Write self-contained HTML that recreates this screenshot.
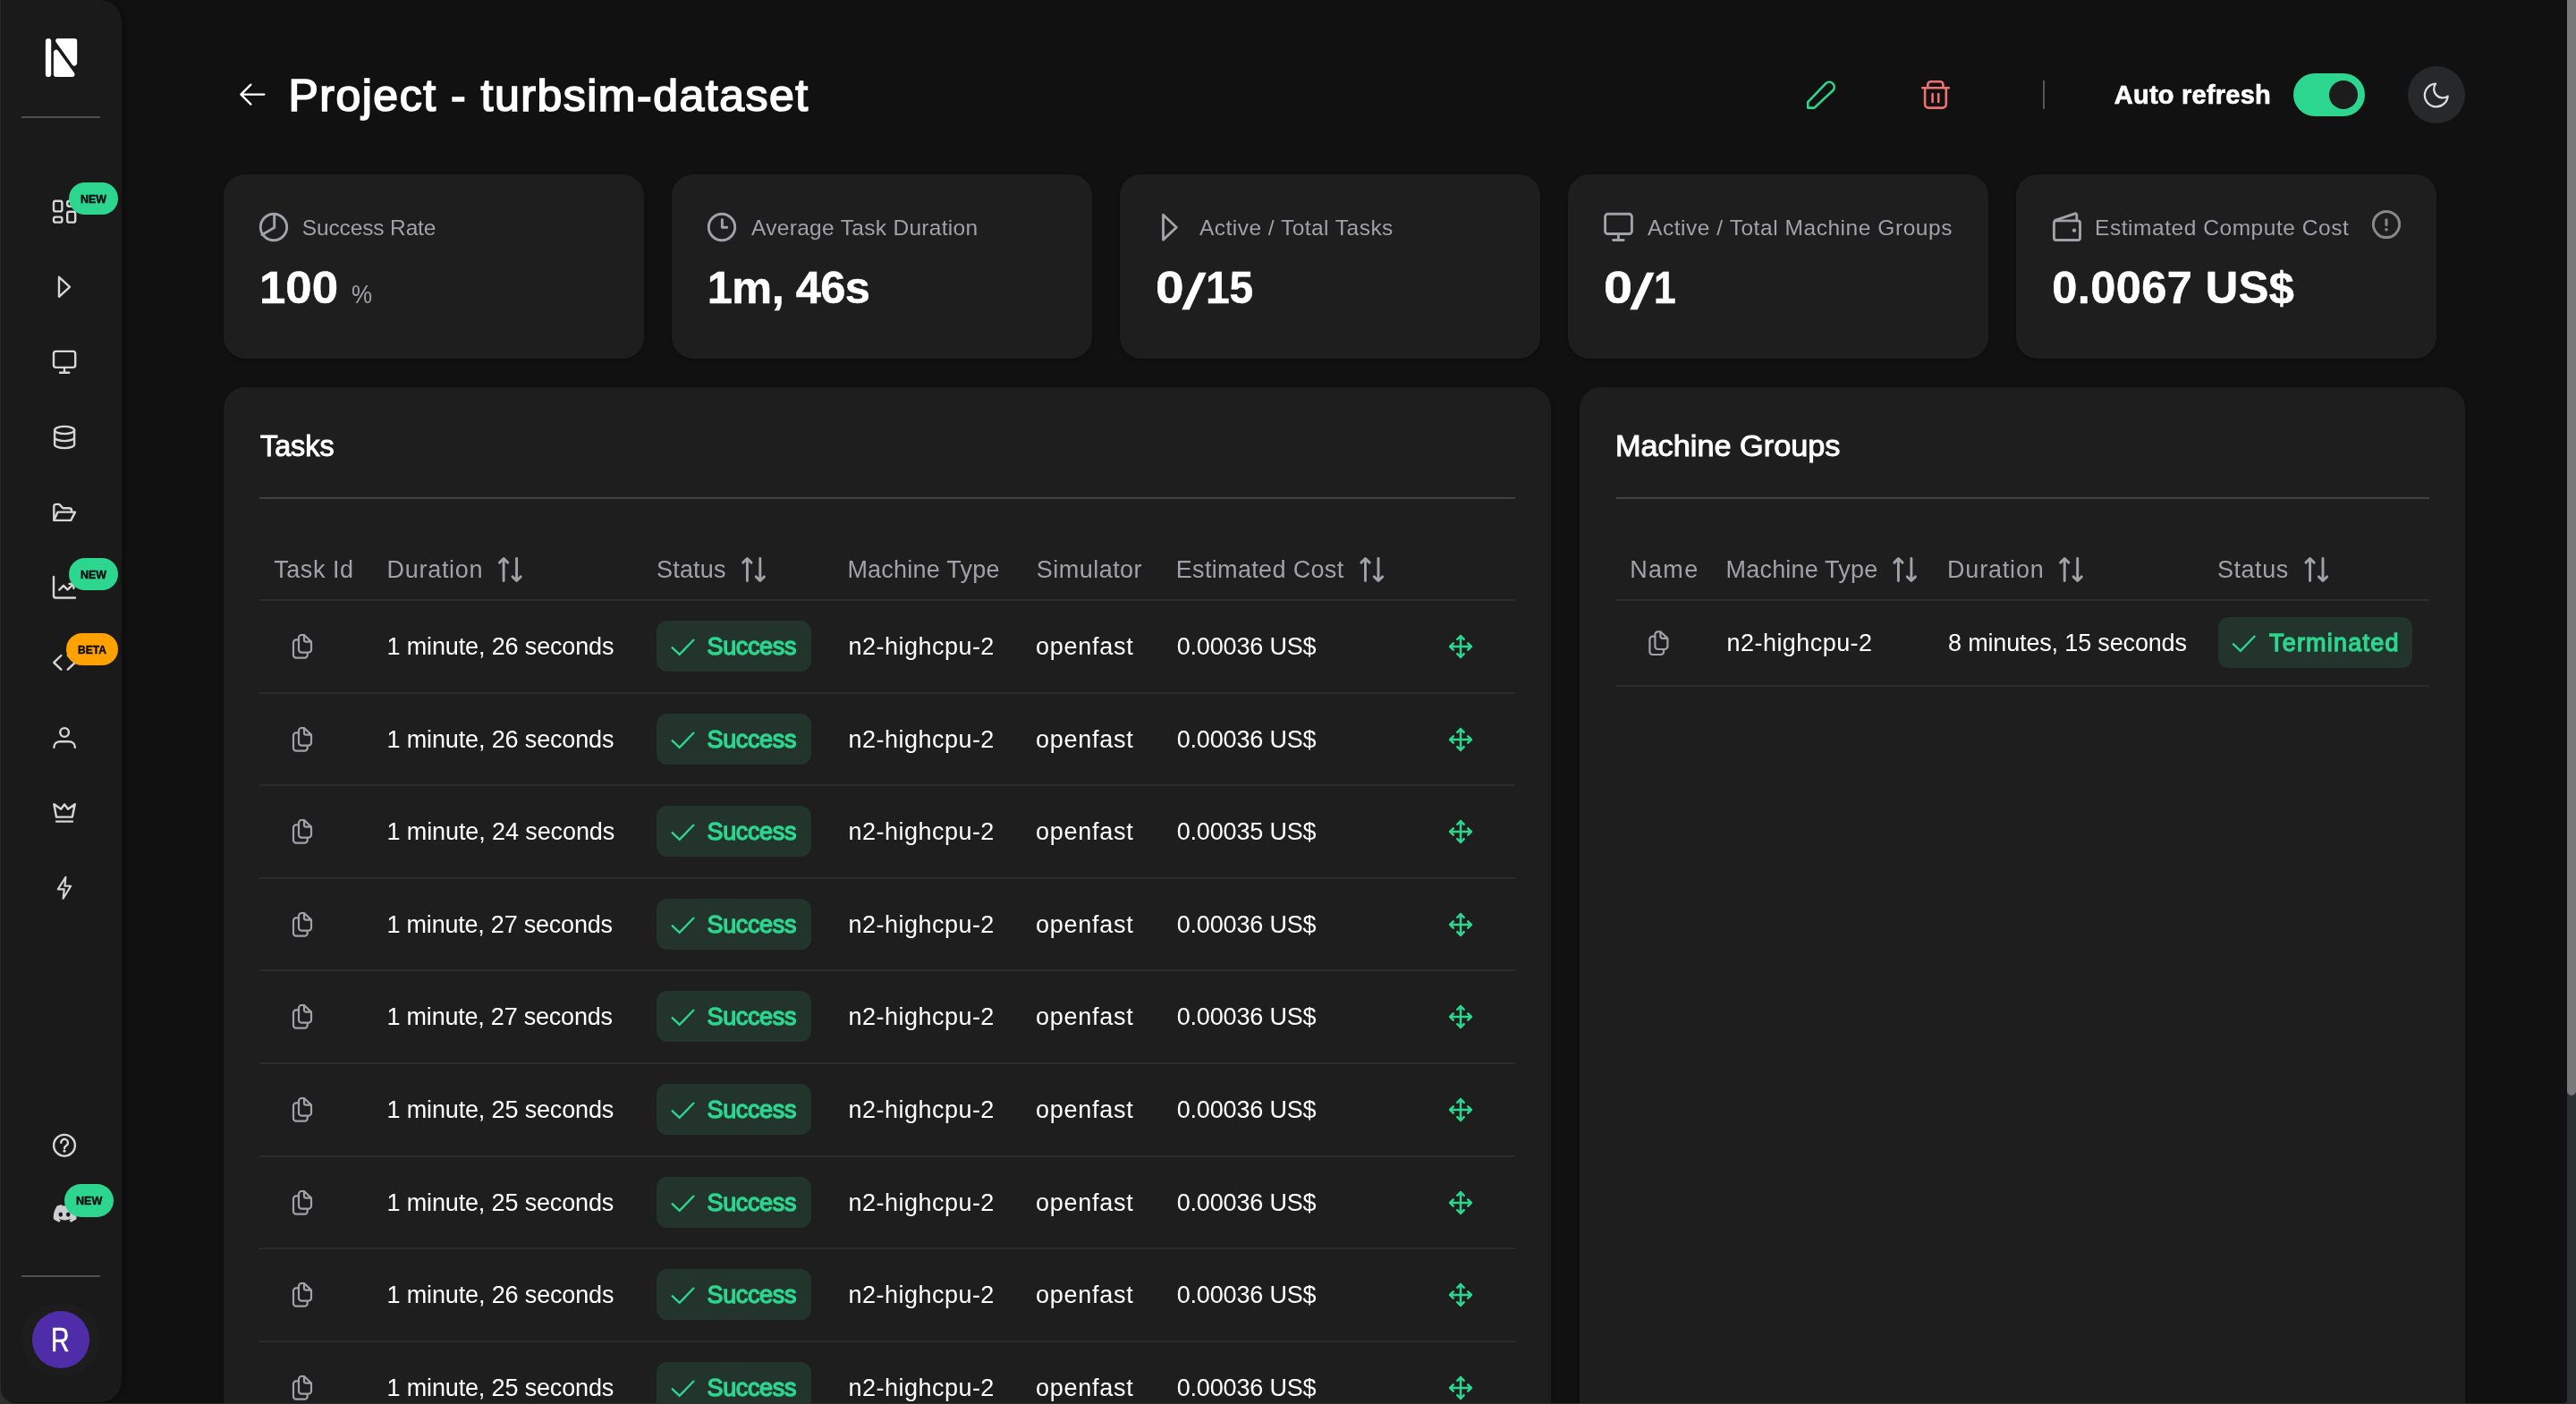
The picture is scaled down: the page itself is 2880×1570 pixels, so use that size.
<!DOCTYPE html>
<html lang="en"><head><meta charset="utf-8"><title>Project - turbsim-dataset</title>
<style>
html,body{margin:0;padding:0;background:#111111;}
body{width:2880px;height:1570px;overflow:hidden;position:relative;font-family:"Liberation Sans",sans-serif;color:#fff;}
#app{position:absolute;left:0;top:0;width:2880px;height:1570px;overflow:hidden;}
.b,.i,.t{position:absolute;display:block;}
.t{white-space:nowrap;}
.i{overflow:visible;}
#txt{position:absolute;left:0;top:0;width:2880px;height:1570px;will-change:transform;}
</style></head>
<body><div id="app">
<main>
<div class="b card" style="left:250.0px;top:195px;width:469.6px;height:206px;background:#1e1e1e;border-radius:24px;box-shadow:0 2px 4px rgba(0,0,0,.28);"></div><div class="b card" style="left:751.1px;top:195px;width:469.6px;height:206px;background:#1e1e1e;border-radius:24px;box-shadow:0 2px 4px rgba(0,0,0,.28);"></div><div class="b card" style="left:1252.2px;top:195px;width:469.6px;height:206px;background:#1e1e1e;border-radius:24px;box-shadow:0 2px 4px rgba(0,0,0,.28);"></div><div class="b card" style="left:1753.3px;top:195px;width:469.6px;height:206px;background:#1e1e1e;border-radius:24px;box-shadow:0 2px 4px rgba(0,0,0,.28);"></div><div class="b card" style="left:2254.4px;top:195px;width:469.6px;height:206px;background:#1e1e1e;border-radius:24px;box-shadow:0 2px 4px rgba(0,0,0,.28);"></div>
<div class="b panel" style="left:250px;top:433px;width:1484px;height:1200px;background:#1e1e1e;border-radius:24px;box-shadow:0 2px 4px rgba(0,0,0,.28);"></div><div class="b panel" style="left:1766px;top:433px;width:990px;height:1200px;background:#1e1e1e;border-radius:24px;box-shadow:0 2px 4px rgba(0,0,0,.28);"></div>
<div class="b" style="left:290px;top:556px;width:1404px;height:2px;background:#404042"></div><div class="b" style="left:1806px;top:556px;width:910px;height:2px;background:#404042"></div><div class="b" style="left:290px;top:670px;width:1404px;height:2px;background:#2b2c2e"></div><div class="b" style="left:290px;top:774px;width:1404px;height:2px;background:#2b2c2e"></div><div class="b" style="left:290px;top:877px;width:1404px;height:2px;background:#2b2c2e"></div><div class="b" style="left:290px;top:981px;width:1404px;height:2px;background:#2b2c2e"></div><div class="b" style="left:290px;top:1084px;width:1404px;height:2px;background:#2b2c2e"></div><div class="b" style="left:290px;top:1188px;width:1404px;height:2px;background:#2b2c2e"></div><div class="b" style="left:290px;top:1292px;width:1404px;height:2px;background:#2b2c2e"></div><div class="b" style="left:290px;top:1395px;width:1404px;height:2px;background:#2b2c2e"></div><div class="b" style="left:290px;top:1499px;width:1404px;height:2px;background:#2b2c2e"></div><div class="b" style="left:290px;top:1602px;width:1404px;height:2px;background:#2b2c2e"></div><div class="b" style="left:1806px;top:670px;width:910px;height:2px;background:#2b2c2e"></div><div class="b" style="left:1806px;top:766px;width:910px;height:2px;background:#2b2c2e"></div><div class="b" style="left:2284px;top:90px;width:2px;height:32px;background:#555"></div>
<div class="b tag" style="left:734px;top:694px;width:173px;height:57px;background:#22342c;border-radius:12px;"></div><div class="b tag" style="left:734px;top:798px;width:173px;height:57px;background:#22342c;border-radius:12px;"></div><div class="b tag" style="left:734px;top:901px;width:173px;height:57px;background:#22342c;border-radius:12px;"></div><div class="b tag" style="left:734px;top:1005px;width:173px;height:57px;background:#22342c;border-radius:12px;"></div><div class="b tag" style="left:734px;top:1108px;width:173px;height:57px;background:#22342c;border-radius:12px;"></div><div class="b tag" style="left:734px;top:1212px;width:173px;height:57px;background:#22342c;border-radius:12px;"></div><div class="b tag" style="left:734px;top:1316px;width:173px;height:57px;background:#22342c;border-radius:12px;"></div><div class="b tag" style="left:734px;top:1419px;width:173px;height:57px;background:#22342c;border-radius:12px;"></div><div class="b tag" style="left:734px;top:1523px;width:173px;height:57px;background:#22342c;border-radius:12px;"></div><div class="b tag" style="left:2480px;top:690px;width:217px;height:57px;background:#22342c;border-radius:12px;"></div>
</main>
<aside>
<div class="b sidebar" style="left:0px;top:0px;width:136px;height:1568px;background:#1a1a1a;border-radius:0 24px 24px 0;box-shadow:2px 0 8px rgba(0,0,0,.3);"></div>
<div class="b" style="left:24px;top:130px;width:88px;height:2px;background:#505050"></div><div class="b" style="left:24px;top:1425.7px;width:88px;height:2px;background:#505050"></div>
<svg class="i" style="left:48px;top:40px" width="42" height="50" viewBox="48 40 42 50" fill="#fff"><rect x="50.9" y="42.9" width="6.3" height="43.2" rx="3.1"/><path d="M64.8,42.9 H83.2 a3,3 0 0 1 3,3 V70.6 a3,3 0 0 1 -5.4,1.8 L62.6,47 a2.6,2.6 0 0 1 2.2,-4.1 Z"/><path d="M59.9,58.3 a2.8,2.8 0 0 1 5.1,-1.6 L83,81.6 a2.8,2.8 0 0 1 -2.3,4.5 H62.9 a3,3 0 0 1 -3,-3 Z"/></svg>
<svg class="i" style="left:56px;top:221px" width="32" height="32" viewBox="56 221 32 32" fill="none" stroke="#d6d6d9" stroke-width="2.4" stroke-linecap="round" stroke-linejoin="round" ><rect x="60" y="224.8" width="9.4" height="11.6" rx="2.2"/><rect x="60" y="242.6" width="9.4" height="6" rx="2.2"/><rect x="75.2" y="224.8" width="9" height="6" rx="2.2"/><rect x="75.2" y="236.8" width="9" height="11.8" rx="2.2"/></svg>
<svg class="i" style="left:56px;top:305px" width="32" height="32" viewBox="56 305 32 32" fill="none" stroke="#d6d6d9" stroke-width="2.4" stroke-linecap="round" stroke-linejoin="round" ><path d="M66,309.8 L78,320.8 L66,331.8 Z"/></svg>
<svg class="i" style="left:56px;top:388px" width="32" height="32" viewBox="56 388 32 32" fill="none" stroke="#d6d6d9" stroke-width="2.4" stroke-linecap="round" stroke-linejoin="round" ><rect x="60" y="392.9" width="24.2" height="18" rx="2.6"/><path d="M72,411 V416.6 M67,416.8 H77.2"/></svg>
<svg class="i" style="left:56px;top:472px" width="32" height="32" viewBox="56 472 32 32" fill="none" stroke="#d6d6d9" stroke-width="2.4" stroke-linecap="round" stroke-linejoin="round" ><ellipse cx="72.1" cy="481" rx="11" ry="4.1"/><path d="M61.1,481 V497 c0,2.300 4.900,4.100 11,4.100 s11,-1.800 11,-4.100 V481 M61.1,489 c0,2.300 4.900,4.100 11,4.100 s11,-1.800 11,-4.100"/></svg>
<svg class="i" style="left:56px;top:556px" width="32" height="32" viewBox="56 556 32 32" fill="none" stroke="#d6d6d9" stroke-width="2.4" stroke-linecap="round" stroke-linejoin="round" ><path d="M60.300,581.900 V566.400 a2.500,2.500 0 0 1 2.500,-2.500 H66.200 L70.300,568.200 H77.300 a2.800,2.800 0 0 1 2.800,2.800 V572.400 M60.300,581.900 L64.600,572.600 H84 L79.200,581.900 Z"/></svg>
<svg class="i" style="left:56px;top:641px" width="32" height="32" viewBox="56 641 32 32" fill="none" stroke="#d6d6d9" stroke-width="2.4" stroke-linecap="round" stroke-linejoin="round" ><path d="M60,645 V666.3 a2.2,2.2 0 0 0 2.2,2.2 H84 M66.2,659.6 L71,654.8 L75.6,659.4 L82,653.2 M77.6,652.9 H82.4 V657.8"/></svg>
<svg class="i" style="left:56px;top:725px" width="32" height="32" viewBox="56 725 32 32" fill="none" stroke="#d6d6d9" stroke-width="2.4" stroke-linecap="round" stroke-linejoin="round" ><path d="M68.4,733 L60.2,740.8 L68.4,748.6 M75.8,748.6 L84,740.8 L75.8,733"/></svg>
<svg class="i" style="left:56px;top:808px" width="32" height="32" viewBox="56 808 32 32" fill="none" stroke="#d6d6d9" stroke-width="2.4" stroke-linecap="round" stroke-linejoin="round" ><circle cx="72.1" cy="819" r="4.850"/><path d="M60.400,835.800 V835.600 C60.400,831.800 63.400,829.300 67.400,829.300 H76.800 C80.800,829.300 83.800,831.800 83.800,835.600 V835.800"/></svg>
<svg class="i" style="left:56px;top:893px" width="32" height="32" viewBox="56 893 32 32" fill="none" stroke="#d6d6d9" stroke-width="2.4" stroke-linecap="round" stroke-linejoin="round" ><path d="M60.400,899.200 L63,913.600 H80.800 L83.800,899.200 L76,904.800 L72.100,899.400 L68.200,904.800 Z M63,918.600 H81"/></svg>
<svg class="i" style="left:56px;top:976px" width="32" height="32" viewBox="56 976 32 32" fill="none" stroke="#d6d6d9" stroke-width="2.1" stroke-linecap="round" stroke-linejoin="round" ><path d="M73.400,980.800 L64.800,994.400 H71.800 L70.600,1004.800 L79.200,990.800 H72.400 Z"/></svg>
<svg class="i" style="left:56px;top:1265px" width="32" height="32" viewBox="56 1265 32 32" fill="none" stroke="#d6d6d9" stroke-width="2.4" stroke-linecap="round" stroke-linejoin="round" ><circle cx="72" cy="1280.800" r="11.9"/><path d="M68.200,1277.700 a3.900,3.900 0 1 1 6.300,3.100 c-1.600,1.100 -2.500,1.700 -2.500,3.200"/><circle cx="72" cy="1287.100" r="1.700" fill="#d6d6d9" stroke="none"/></svg>
<svg class="i" style="left:56px;top:1343px" width="32" height="28" viewBox="56 1343 32 28" fill="#cfcfd2"><g transform="translate(72 1347) scale(0.955) translate(-72 -1347)"><path d="M80.6,1348.6 c-1.8,-0.8 -3.6,-1.4 -5.6,-1.7 l-0.8,1.6 c-1.5,-0.2 -3,-0.2 -4.500,0 l-0.8,-1.6 c-2,0.3 -3.800,0.900 -5.600,1.700 c-3.500,5.300 -4.500,10.400 -4,15.500 c2.300,1.700 4.600,2.800 6.800,3.500 l1.500,-2.400 c-0.800,-0.300 -1.600,-0.700 -2.300,-1.100 l0.600,-0.400 c4.400,2 9.200,2 13.600,0 l0.600,0.400 c-0.700,0.400 -1.500,0.800 -2.300,1.100 l1.500,2.400 c2.200,-0.700 4.500,-1.800 6.800,-3.500 c0.600,-5.900 -1,-11 -4,-15.500 Z"/><ellipse cx="67.6" cy="1358.600" rx="2.4" ry="2.700" fill="#1a1a1a"/><ellipse cx="76.400" cy="1358.600" rx="2.4" ry="2.700" fill="#1a1a1a"/></g></svg>
<div class="b" style="left:77px;top:204px;width:55px;height:36px;background:#2dd68e;border-radius:18px;"></div><div class="b" style="left:77px;top:624px;width:55px;height:36px;background:#2dd68e;border-radius:18px;"></div><div class="b" style="left:74px;top:708px;width:58px;height:36px;background:#ffa200;border-radius:18px;"></div><div class="b" style="left:72px;top:1324px;width:55px;height:37px;background:#2dd68e;border-radius:18.5px;"></div>
</aside>
<div class="b" style="left:2564px;top:82px;width:80px;height:48px;background:#2dd68e;border-radius:24px;"></div><div class="b" style="left:2604px;top:90px;width:32px;height:32px;background:#1c1c1c;border-radius:16px;"></div><div class="b" style="left:2692px;top:74px;width:64px;height:64px;background:#27282a;border-radius:32px;"></div><div class="b" style="left:24px;top:1458px;width:88px;height:80px;background:#1d1d1d;border-radius:40px;"></div><div class="b" style="left:36px;top:1466px;width:64px;height:64px;background:#502da8;border-radius:32px;"></div><div class="b" style="left:0px;top:0px;width:1px;height:1570px;background:#262728;"></div><div class="b" style="left:0px;top:1569px;width:2880px;height:1px;background:#26302c;"></div><div class="b" style="left:0;top:1552px;width:18px;height:18px;background:radial-gradient(circle at 100% 0,transparent 17px,#2e3130 18px)"></div><div class="b" style="left:2862px;top:1552px;width:18px;height:18px;background:radial-gradient(circle at 0 0,transparent 17px,#2e3130 18px)"></div><div class="b" style="left:2870px;top:0px;width:10px;height:1570px;background:#2c3030;"></div><div class="b" style="left:2870px;top:0px;width:10px;height:1224.5px;background:#797979;border-radius:0 0 5px 5px;"></div>
<svg class="i" style="left:554px;top:620px" width="34" height="34" viewBox="554 620 34 34" fill="none" stroke="#a1a1aa" stroke-width="2.9" stroke-linecap="round" stroke-linejoin="round" ><path d="M563.1,649.6 V624.8 M558.5,629.1 L563.1,624.5 L567.8,629.1 M577.6,624.4 V649.4 M573.0,644.9 L577.6,649.5 L582.2,644.9"/></svg>
<svg class="i" style="left:826px;top:620px" width="34" height="34" viewBox="826 620 34 34" fill="none" stroke="#a1a1aa" stroke-width="2.9" stroke-linecap="round" stroke-linejoin="round" ><path d="M835.4,649.6 V624.8 M830.7,629.1 L835.4,624.5 L840.0,629.1 M849.8,624.4 V649.4 M845.2,644.9 L849.8,649.5 L854.5,644.9"/></svg>
<svg class="i" style="left:1517px;top:620px" width="34" height="34" viewBox="1517 620 34 34" fill="none" stroke="#a1a1aa" stroke-width="2.9" stroke-linecap="round" stroke-linejoin="round" ><path d="M1526.5,649.6 V624.8 M1521.9,629.1 L1526.5,624.5 L1531.2,629.1 M1541.0,624.4 V649.4 M1536.3,644.9 L1541.0,649.5 L1545.7,644.9"/></svg>
<svg class="i" style="left:2113px;top:620px" width="34" height="34" viewBox="2113 620 34 34" fill="none" stroke="#a1a1aa" stroke-width="2.9" stroke-linecap="round" stroke-linejoin="round" ><path d="M2122.4,649.6 V624.8 M2117.8,629.1 L2122.4,624.5 L2127.1,629.1 M2136.9,624.4 V649.4 M2132.2,644.9 L2136.9,649.5 L2141.5,644.9"/></svg>
<svg class="i" style="left:2299px;top:620px" width="34" height="34" viewBox="2299 620 34 34" fill="none" stroke="#a1a1aa" stroke-width="2.9" stroke-linecap="round" stroke-linejoin="round" ><path d="M2308.2,649.6 V624.8 M2303.6,629.1 L2308.2,624.5 L2312.9,629.1 M2322.7,624.4 V649.4 M2318.1,644.9 L2322.7,649.5 L2327.3,644.9"/></svg>
<svg class="i" style="left:2573px;top:620px" width="34" height="34" viewBox="2573 620 34 34" fill="none" stroke="#a1a1aa" stroke-width="2.9" stroke-linecap="round" stroke-linejoin="round" ><path d="M2582.6,649.6 V624.8 M2577.9,629.1 L2582.6,624.5 L2587.2,629.1 M2597.0,624.4 V649.4 M2592.4,644.9 L2597.0,649.5 L2601.7,644.9"/></svg>
<svg class="i" style="left:324px;top:706px" width="30" height="36" viewBox="324 706 30 36" fill="none" stroke="#a1a1aa" stroke-width="2.2" stroke-linecap="round" stroke-linejoin="round" ><path d="M340.0,710.0 H337.2 a3.2,3.2 0 0 0 -3.2,3.2 V726.5 a3.2,3.2 0 0 0 3.2,3.2 H344.8 a3.2,3.2 0 0 0 3.2,-3.2 V717.6 L340.0,710.0 V715.4 a2.2,2.2 0 0 0 2.2,2.2 H348.0 M333.0,715.4 H331.2 a3.2,3.2 0 0 0 -3.2,3.2 V732.5 a3.2,3.2 0 0 0 3.2,3.2 H340.5 a3.2,3.2 0 0 0 3.2,-3.2 V731.0"/></svg>
<svg class="i" style="left:748px;top:712px" width="32" height="24" viewBox="748 712 32 24" fill="none" stroke="#2dd68e" stroke-width="2.3" stroke-linecap="butt" stroke-linejoin="miter" ><path d="M751.0,723.7 L759.7,731.9 L776.0,715.0"/></svg>
<svg class="i" style="left:1617px;top:706.5px" width="32" height="32" viewBox="1617 706.5 32 32" fill="none" stroke="#2dd68e" stroke-width="2.5" stroke-linecap="round" stroke-linejoin="round" ><path d="M1633,710.6 V734.4 M1621.1,722.5 H1644.9 M1629.3,714.3000000000001 L1633,710.6 L1636.7,714.3000000000001 M1629.3,730.6999999999999 L1633,734.4 L1636.7,730.6999999999999 M1624.8,718.8 L1621.1,722.5 L1624.8,726.2 M1641.2,718.8 L1644.9,722.5 L1641.2,726.2"/></svg>
<svg class="i" style="left:324px;top:810px" width="30" height="36" viewBox="324 810 30 36" fill="none" stroke="#a1a1aa" stroke-width="2.2" stroke-linecap="round" stroke-linejoin="round" ><path d="M340.0,814.0 H337.2 a3.2,3.2 0 0 0 -3.2,3.2 V830.5 a3.2,3.2 0 0 0 3.2,3.2 H344.8 a3.2,3.2 0 0 0 3.2,-3.2 V821.6 L340.0,814.0 V819.4 a2.2,2.2 0 0 0 2.2,2.2 H348.0 M333.0,819.4 H331.2 a3.2,3.2 0 0 0 -3.2,3.2 V836.5 a3.2,3.2 0 0 0 3.2,3.2 H340.5 a3.2,3.2 0 0 0 3.2,-3.2 V835.0"/></svg>
<svg class="i" style="left:748px;top:816px" width="32" height="24" viewBox="748 816 32 24" fill="none" stroke="#2dd68e" stroke-width="2.3" stroke-linecap="butt" stroke-linejoin="miter" ><path d="M751.0,827.7 L759.7,835.9 L776.0,819.0"/></svg>
<svg class="i" style="left:1617px;top:810.5px" width="32" height="32" viewBox="1617 810.5 32 32" fill="none" stroke="#2dd68e" stroke-width="2.5" stroke-linecap="round" stroke-linejoin="round" ><path d="M1633,814.6 V838.4 M1621.1,826.5 H1644.9 M1629.3,818.3000000000001 L1633,814.6 L1636.7,818.3000000000001 M1629.3,834.6999999999999 L1633,838.4 L1636.7,834.6999999999999 M1624.8,822.8 L1621.1,826.5 L1624.8,830.2 M1641.2,822.8 L1644.9,826.5 L1641.2,830.2"/></svg>
<svg class="i" style="left:324px;top:912px" width="30" height="36" viewBox="324 912 30 36" fill="none" stroke="#a1a1aa" stroke-width="2.2" stroke-linecap="round" stroke-linejoin="round" ><path d="M340.0,917.0 H337.2 a3.2,3.2 0 0 0 -3.2,3.2 V933.5 a3.2,3.2 0 0 0 3.2,3.2 H344.8 a3.2,3.2 0 0 0 3.2,-3.2 V924.6 L340.0,917.0 V922.4 a2.2,2.2 0 0 0 2.2,2.2 H348.0 M333.0,922.4 H331.2 a3.2,3.2 0 0 0 -3.2,3.2 V939.5 a3.2,3.2 0 0 0 3.2,3.2 H340.5 a3.2,3.2 0 0 0 3.2,-3.2 V938.0"/></svg>
<svg class="i" style="left:748px;top:918px" width="32" height="24" viewBox="748 918 32 24" fill="none" stroke="#2dd68e" stroke-width="2.3" stroke-linecap="butt" stroke-linejoin="miter" ><path d="M751.0,930.7 L759.7,938.9 L776.0,922.0"/></svg>
<svg class="i" style="left:1617px;top:913.5px" width="32" height="32" viewBox="1617 913.5 32 32" fill="none" stroke="#2dd68e" stroke-width="2.5" stroke-linecap="round" stroke-linejoin="round" ><path d="M1633,917.6 V941.4 M1621.1,929.5 H1644.9 M1629.3,921.3000000000001 L1633,917.6 L1636.7,921.3000000000001 M1629.3,937.6999999999999 L1633,941.4 L1636.7,937.6999999999999 M1624.8,925.8 L1621.1,929.5 L1624.8,933.2 M1641.2,925.8 L1644.9,929.5 L1641.2,933.2"/></svg>
<svg class="i" style="left:324px;top:1016px" width="30" height="36" viewBox="324 1016 30 36" fill="none" stroke="#a1a1aa" stroke-width="2.2" stroke-linecap="round" stroke-linejoin="round" ><path d="M340.0,1021.0 H337.2 a3.2,3.2 0 0 0 -3.2,3.2 V1037.5 a3.2,3.2 0 0 0 3.2,3.2 H344.8 a3.2,3.2 0 0 0 3.2,-3.2 V1028.6 L340.0,1021.0 V1026.4 a2.2,2.2 0 0 0 2.2,2.2 H348.0 M333.0,1026.4 H331.2 a3.2,3.2 0 0 0 -3.2,3.2 V1043.5 a3.2,3.2 0 0 0 3.2,3.2 H340.5 a3.2,3.2 0 0 0 3.2,-3.2 V1042.0"/></svg>
<svg class="i" style="left:748px;top:1022px" width="32" height="24" viewBox="748 1022 32 24" fill="none" stroke="#2dd68e" stroke-width="2.3" stroke-linecap="butt" stroke-linejoin="miter" ><path d="M751.0,1034.7 L759.7,1042.9 L776.0,1026.0"/></svg>
<svg class="i" style="left:1617px;top:1017.5px" width="32" height="32" viewBox="1617 1017.5 32 32" fill="none" stroke="#2dd68e" stroke-width="2.5" stroke-linecap="round" stroke-linejoin="round" ><path d="M1633,1021.6 V1045.4 M1621.1,1033.5 H1644.9 M1629.3,1025.3 L1633,1021.6 L1636.7,1025.3 M1629.3,1041.7 L1633,1045.4 L1636.7,1041.7 M1624.8,1029.8 L1621.1,1033.5 L1624.8,1037.2 M1641.2,1029.8 L1644.9,1033.5 L1641.2,1037.2"/></svg>
<svg class="i" style="left:324px;top:1120px" width="30" height="36" viewBox="324 1120 30 36" fill="none" stroke="#a1a1aa" stroke-width="2.2" stroke-linecap="round" stroke-linejoin="round" ><path d="M340.0,1124.0 H337.2 a3.2,3.2 0 0 0 -3.2,3.2 V1140.5 a3.2,3.2 0 0 0 3.2,3.2 H344.8 a3.2,3.2 0 0 0 3.2,-3.2 V1131.6 L340.0,1124.0 V1129.4 a2.2,2.2 0 0 0 2.2,2.2 H348.0 M333.0,1129.4 H331.2 a3.2,3.2 0 0 0 -3.2,3.2 V1146.5 a3.2,3.2 0 0 0 3.2,3.2 H340.5 a3.2,3.2 0 0 0 3.2,-3.2 V1145.0"/></svg>
<svg class="i" style="left:748px;top:1126px" width="32" height="24" viewBox="748 1126 32 24" fill="none" stroke="#2dd68e" stroke-width="2.3" stroke-linecap="butt" stroke-linejoin="miter" ><path d="M751.0,1137.7 L759.7,1145.9 L776.0,1129.0"/></svg>
<svg class="i" style="left:1617px;top:1120.5px" width="32" height="32" viewBox="1617 1120.5 32 32" fill="none" stroke="#2dd68e" stroke-width="2.5" stroke-linecap="round" stroke-linejoin="round" ><path d="M1633,1124.6 V1148.4 M1621.1,1136.5 H1644.9 M1629.3,1128.3 L1633,1124.6 L1636.7,1128.3 M1629.3,1144.7 L1633,1148.4 L1636.7,1144.7 M1624.8,1132.8 L1621.1,1136.5 L1624.8,1140.2 M1641.2,1132.8 L1644.9,1136.5 L1641.2,1140.2"/></svg>
<svg class="i" style="left:324px;top:1224px" width="30" height="36" viewBox="324 1224 30 36" fill="none" stroke="#a1a1aa" stroke-width="2.2" stroke-linecap="round" stroke-linejoin="round" ><path d="M340.0,1228.0 H337.2 a3.2,3.2 0 0 0 -3.2,3.2 V1244.5 a3.2,3.2 0 0 0 3.2,3.2 H344.8 a3.2,3.2 0 0 0 3.2,-3.2 V1235.6 L340.0,1228.0 V1233.4 a2.2,2.2 0 0 0 2.2,2.2 H348.0 M333.0,1233.4 H331.2 a3.2,3.2 0 0 0 -3.2,3.2 V1250.5 a3.2,3.2 0 0 0 3.2,3.2 H340.5 a3.2,3.2 0 0 0 3.2,-3.2 V1249.0"/></svg>
<svg class="i" style="left:748px;top:1230px" width="32" height="24" viewBox="748 1230 32 24" fill="none" stroke="#2dd68e" stroke-width="2.3" stroke-linecap="butt" stroke-linejoin="miter" ><path d="M751.0,1241.7 L759.7,1249.9 L776.0,1233.0"/></svg>
<svg class="i" style="left:1617px;top:1224.5px" width="32" height="32" viewBox="1617 1224.5 32 32" fill="none" stroke="#2dd68e" stroke-width="2.5" stroke-linecap="round" stroke-linejoin="round" ><path d="M1633,1228.6 V1252.4 M1621.1,1240.5 H1644.9 M1629.3,1232.3 L1633,1228.6 L1636.7,1232.3 M1629.3,1248.7 L1633,1252.4 L1636.7,1248.7 M1624.8,1236.8 L1621.1,1240.5 L1624.8,1244.2 M1641.2,1236.8 L1644.9,1240.5 L1641.2,1244.2"/></svg>
<svg class="i" style="left:324px;top:1328px" width="30" height="36" viewBox="324 1328 30 36" fill="none" stroke="#a1a1aa" stroke-width="2.2" stroke-linecap="round" stroke-linejoin="round" ><path d="M340.0,1332.0 H337.2 a3.2,3.2 0 0 0 -3.2,3.2 V1348.5 a3.2,3.2 0 0 0 3.2,3.2 H344.8 a3.2,3.2 0 0 0 3.2,-3.2 V1339.6 L340.0,1332.0 V1337.4 a2.2,2.2 0 0 0 2.2,2.2 H348.0 M333.0,1337.4 H331.2 a3.2,3.2 0 0 0 -3.2,3.2 V1354.5 a3.2,3.2 0 0 0 3.2,3.2 H340.5 a3.2,3.2 0 0 0 3.2,-3.2 V1353.0"/></svg>
<svg class="i" style="left:748px;top:1334px" width="32" height="24" viewBox="748 1334 32 24" fill="none" stroke="#2dd68e" stroke-width="2.3" stroke-linecap="butt" stroke-linejoin="miter" ><path d="M751.0,1345.7 L759.7,1353.9 L776.0,1337.0"/></svg>
<svg class="i" style="left:1617px;top:1328.5px" width="32" height="32" viewBox="1617 1328.5 32 32" fill="none" stroke="#2dd68e" stroke-width="2.5" stroke-linecap="round" stroke-linejoin="round" ><path d="M1633,1332.6 V1356.4 M1621.1,1344.5 H1644.9 M1629.3,1336.3 L1633,1332.6 L1636.7,1336.3 M1629.3,1352.7 L1633,1356.4 L1636.7,1352.7 M1624.8,1340.8 L1621.1,1344.5 L1624.8,1348.2 M1641.2,1340.8 L1644.9,1344.5 L1641.2,1348.2"/></svg>
<svg class="i" style="left:324px;top:1430px" width="30" height="36" viewBox="324 1430 30 36" fill="none" stroke="#a1a1aa" stroke-width="2.2" stroke-linecap="round" stroke-linejoin="round" ><path d="M340.0,1435.0 H337.2 a3.2,3.2 0 0 0 -3.2,3.2 V1451.5 a3.2,3.2 0 0 0 3.2,3.2 H344.8 a3.2,3.2 0 0 0 3.2,-3.2 V1442.6 L340.0,1435.0 V1440.4 a2.2,2.2 0 0 0 2.2,2.2 H348.0 M333.0,1440.4 H331.2 a3.2,3.2 0 0 0 -3.2,3.2 V1457.5 a3.2,3.2 0 0 0 3.2,3.2 H340.5 a3.2,3.2 0 0 0 3.2,-3.2 V1456.0"/></svg>
<svg class="i" style="left:748px;top:1436px" width="32" height="24" viewBox="748 1436 32 24" fill="none" stroke="#2dd68e" stroke-width="2.3" stroke-linecap="butt" stroke-linejoin="miter" ><path d="M751.0,1448.7 L759.7,1456.9 L776.0,1440.0"/></svg>
<svg class="i" style="left:1617px;top:1431.5px" width="32" height="32" viewBox="1617 1431.5 32 32" fill="none" stroke="#2dd68e" stroke-width="2.5" stroke-linecap="round" stroke-linejoin="round" ><path d="M1633,1435.6 V1459.4 M1621.1,1447.5 H1644.9 M1629.3,1439.3 L1633,1435.6 L1636.7,1439.3 M1629.3,1455.7 L1633,1459.4 L1636.7,1455.7 M1624.8,1443.8 L1621.1,1447.5 L1624.8,1451.2 M1641.2,1443.8 L1644.9,1447.5 L1641.2,1451.2"/></svg>
<svg class="i" style="left:324px;top:1534px" width="30" height="36" viewBox="324 1534 30 36" fill="none" stroke="#a1a1aa" stroke-width="2.2" stroke-linecap="round" stroke-linejoin="round" ><path d="M340.0,1539.0 H337.2 a3.2,3.2 0 0 0 -3.2,3.2 V1555.5 a3.2,3.2 0 0 0 3.2,3.2 H344.8 a3.2,3.2 0 0 0 3.2,-3.2 V1546.6 L340.0,1539.0 V1544.4 a2.2,2.2 0 0 0 2.2,2.2 H348.0 M333.0,1544.4 H331.2 a3.2,3.2 0 0 0 -3.2,3.2 V1561.5 a3.2,3.2 0 0 0 3.2,3.2 H340.5 a3.2,3.2 0 0 0 3.2,-3.2 V1560.0"/></svg>
<svg class="i" style="left:748px;top:1540px" width="32" height="24" viewBox="748 1540 32 24" fill="none" stroke="#2dd68e" stroke-width="2.3" stroke-linecap="butt" stroke-linejoin="miter" ><path d="M751.0,1552.7 L759.7,1560.9 L776.0,1544.0"/></svg>
<svg class="i" style="left:1617px;top:1535.5px" width="32" height="32" viewBox="1617 1535.5 32 32" fill="none" stroke="#2dd68e" stroke-width="2.5" stroke-linecap="round" stroke-linejoin="round" ><path d="M1633,1539.6 V1563.4 M1621.1,1551.5 H1644.9 M1629.3,1543.3 L1633,1539.6 L1636.7,1543.3 M1629.3,1559.7 L1633,1563.4 L1636.7,1559.7 M1624.8,1547.8 L1621.1,1551.5 L1624.8,1555.2 M1641.2,1547.8 L1644.9,1551.5 L1641.2,1555.2"/></svg>
<svg class="i" style="left:1840px;top:702px" width="30" height="36" viewBox="1840 702 30 36" fill="none" stroke="#a1a1aa" stroke-width="2.2" stroke-linecap="round" stroke-linejoin="round" ><path d="M1856.4,706.3 H1853.6 a3.2,3.2 0 0 0 -3.2,3.2 V722.8 a3.2,3.2 0 0 0 3.2,3.2 H1861.2 a3.2,3.2 0 0 0 3.2,-3.2 V713.9 L1856.4,706.3 V711.7 a2.2,2.2 0 0 0 2.2,2.2 H1864.4 M1849.4,711.7 H1847.6 a3.2,3.2 0 0 0 -3.2,3.2 V728.8 a3.2,3.2 0 0 0 3.2,3.2 H1856.9 a3.2,3.2 0 0 0 3.2,-3.2 V727.3"/></svg>
<svg class="i" style="left:2493px;top:708px" width="32" height="24" viewBox="2493 708 32 24" fill="none" stroke="#2dd68e" stroke-width="2.3" stroke-linecap="butt" stroke-linejoin="miter" ><path d="M2496.2,719.7 L2504.9,727.9 L2521.2,711.0"/></svg>
<svg class="i" style="left:264px;top:90px" width="36" height="32" viewBox="264 90 36 32" fill="none" stroke="#fff" stroke-width="2.3" stroke-linecap="round" stroke-linejoin="round" ><path d="M295.4,105.600 H269.600 M280.400,94.600 L269.400,105.600 L280.400,116.600"/></svg>
<svg class="i" style="left:2016px;top:86px" width="40" height="40" viewBox="2016 86 40 40" fill="none" stroke="#2dd68e" stroke-width="2.6" stroke-linecap="round" stroke-linejoin="round" ><path d="M2021.2,120.600 V114.200 L2041.400,93.200 a5.600,5.600 0 0 1 8,7.800 L2028.400,120.600 Z"/></svg>
<svg class="i" style="left:2144px;top:86px" width="40" height="40" viewBox="2144 86 40 40" fill="none" stroke="#ee7272" stroke-width="2.6" stroke-linecap="round" stroke-linejoin="round" ><path d="M2149.200,98.300 H2178.800 M2155.300,98 V94.600 a3.400,3.400 0 0 1 3.400,-3.400 H2169 a3.400,3.400 0 0 1 3.400,3.400 V98 M2152.100,98.600 V116.600 a4,4 0 0 0 4,4 H2171.800 a4,4 0 0 0 4,-4 V98.600 M2160.600,105 V114 M2167.200,105 V114"/></svg>
<svg class="i" style="left:2706px;top:88px" width="36" height="36" viewBox="2706 88 36 36" fill="none" stroke="#dedede" stroke-width="2.3" stroke-linecap="round" stroke-linejoin="round" ><path d="M2723,93.600 A12.900,12.900 0 1 0 2736.600,107.600 A9.900,9.900 0 0 1 2723,93.600 Z"/></svg>
<svg class="i" style="left:288px;top:236px" width="36" height="36" viewBox="288 236 36 36" fill="none" stroke="#a1a1aa" stroke-width="2.9" stroke-linecap="round" stroke-linejoin="round" ><circle cx="306" cy="254" r="14.7"/><path d="M306.700,239.600 V254.600 L293,262.500"/></svg>
<svg class="i" style="left:789px;top:236px" width="36" height="36" viewBox="789 236 36 36" fill="none" stroke="#a1a1aa" stroke-width="2.9" stroke-linecap="round" stroke-linejoin="round" ><circle cx="807" cy="254" r="14.7"/><path d="M807.400,245.600 V254.300 H812.800"/></svg>
<svg class="i" style="left:1292px;top:236px" width="32" height="36" viewBox="1292 236 32 36" fill="none" stroke="#a1a1aa" stroke-width="2.9" stroke-linecap="round" stroke-linejoin="round" ><path d="M1300.500,240.300 L1315.300,254.200 L1300.500,268.100 Z"/></svg>
<svg class="i" style="left:1790px;top:236px" width="40" height="36" viewBox="1790 236 40 36" fill="none" stroke="#a1a1aa" stroke-width="2.9" stroke-linecap="round" stroke-linejoin="round" ><rect x="1794.600" y="239.300" width="29.800" height="22.200" rx="3"/><path d="M1809.400,262 V268.300 M1803.600,268.500 H1815.200"/></svg>
<svg class="i" style="left:2292px;top:234px" width="40" height="38" viewBox="2292 234 40 38" fill="none" stroke="#a1a1aa" stroke-width="2.9" stroke-linecap="round" stroke-linejoin="round" ><rect x="2296.400" y="246.900" width="29.100" height="21.600" rx="2.600"/><path d="M2297.600,246.400 L2319.800,238.900 a1.500,1.500 0 0 1 2,1.400 V246.400"/><circle cx="2319" cy="257.600" r="2.200" fill="#a1a1aa" stroke="none"/></svg>
<svg class="i" style="left:2650px;top:233px" width="36" height="36" viewBox="2650 233 36 36" fill="none" stroke="#888888" stroke-width="3.0" stroke-linecap="round" stroke-linejoin="round" ><circle cx="2668" cy="251" r="14.6"/><path d="M2668,245.700 V251.500"/><circle cx="2668" cy="256.800" r="1.800" fill="#888" stroke="none"/></svg>
<div id="txt">
<span class="t" style="left:322.4px;top:82px;font-size:50px;line-height:50px;letter-spacing:1.51px;-webkit-text-stroke:1.7px #fff;">Project - turbsim-dataset</span>
<span class="t" style="left:2363.8px;top:92px;font-size:29px;line-height:29px;letter-spacing:0.23px;font-weight:700;-webkit-text-stroke:0.7px #fff;">Auto refresh</span>
<span class="t" style="left:337.8px;top:243px;font-size:24.5px;line-height:24.5px;letter-spacing:-0.14px;color:#a1a1aa;">Success Rate</span>
<span class="t" style="left:840.0px;top:243px;font-size:24.5px;line-height:24.5px;letter-spacing:0.31px;color:#a1a1aa;">Average Task Duration</span>
<span class="t" style="left:1341.0px;top:243px;font-size:24.5px;line-height:24.5px;letter-spacing:0.47px;color:#a1a1aa;">Active / Total Tasks</span>
<span class="t" style="left:1842.0px;top:243px;font-size:24.5px;line-height:24.5px;letter-spacing:0.55px;color:#a1a1aa;">Active / Total Machine Groups</span>
<span class="t" style="left:2342.0px;top:243px;font-size:24.5px;line-height:24.5px;letter-spacing:0.55px;color:#a1a1aa;">Estimated Compute Cost</span>
<span class="t" style="left:289.9px;top:297px;font-size:50.5px;line-height:50.5px;font-weight:700;-webkit-text-stroke:0.5px #fff;transform:scaleX(1.045);transform-origin:0 50%;">100</span>
<span class="t" style="left:393.2px;top:314px;font-size:29.5px;line-height:29.5px;color:#a1a1aa;transform:scaleX(0.880);transform-origin:0 50%;">%</span>
<span class="t" style="left:790.8px;top:297px;font-size:50.5px;line-height:50.5px;letter-spacing:-0.54px;font-weight:700;-webkit-text-stroke:0.5px #fff;">1m, 46s</span>
<span class="t" style="left:1291.8px;top:297px;font-size:50.5px;line-height:50.5px;font-weight:700;-webkit-text-stroke:0.5px #fff;transform:scaleX(1.124);transform-origin:0 50%;">0</span>
<span class="t" style="left:1321.6px;top:299px;font-size:55px;line-height:55px;-webkit-text-stroke:0.6px #fff;transform:scaleX(1.700);transform-origin:0 50%;">/</span>
<span class="t" style="left:1348.0px;top:297px;font-size:50.5px;line-height:50.5px;font-weight:700;-webkit-text-stroke:0.5px #fff;transform:scaleX(0.947);transform-origin:0 50%;">15</span>
<span class="t" style="left:1792.6px;top:297px;font-size:50.5px;line-height:50.5px;font-weight:700;-webkit-text-stroke:0.5px #fff;transform:scaleX(1.140);transform-origin:0 50%;">0</span>
<span class="t" style="left:1822.8px;top:299px;font-size:55px;line-height:55px;-webkit-text-stroke:0.6px #fff;transform:scaleX(1.688);transform-origin:0 50%;">/</span>
<span class="t" style="left:1849.4px;top:297px;font-size:50.5px;line-height:50.5px;font-weight:700;-webkit-text-stroke:0.5px #fff;transform:scaleX(0.879);transform-origin:0 50%;">1</span>
<span class="t" style="left:2294.2px;top:297px;font-size:50.5px;line-height:50.5px;letter-spacing:0.44px;font-weight:700;-webkit-text-stroke:0.5px #fff;">0.0067 US$</span>
<span class="t" style="left:291.3px;top:481px;font-size:34px;line-height:34px;-webkit-text-stroke:1.0px #fff;transform:scaleX(0.950);transform-origin:0 50%;">Tasks</span>
<span class="t" style="left:1805.8px;top:481px;font-size:34px;line-height:34px;-webkit-text-stroke:1.0px #fff;transform:scaleX(1.008);transform-origin:0 50%;">Machine Groups</span>
<span class="t" style="left:306.2px;top:624px;font-size:27px;line-height:27px;letter-spacing:0.56px;color:#a1a1aa;">Task Id</span>
<span class="t" style="left:432.6px;top:624px;font-size:27px;line-height:27px;letter-spacing:0.69px;color:#a1a1aa;">Duration</span>
<span class="t" style="left:734.0px;top:624px;font-size:27px;line-height:27px;letter-spacing:0.19px;color:#a1a1aa;">Status</span>
<span class="t" style="left:947.4px;top:624px;font-size:27px;line-height:27px;letter-spacing:0.23px;color:#a1a1aa;">Machine Type</span>
<span class="t" style="left:1158.8px;top:624px;font-size:27px;line-height:27px;letter-spacing:0.47px;color:#a1a1aa;">Simulator</span>
<span class="t" style="left:1314.7px;top:624px;font-size:27px;line-height:27px;letter-spacing:0.34px;color:#a1a1aa;">Estimated Cost</span>
<span class="t" style="left:432.5px;top:710px;font-size:27px;line-height:27px;letter-spacing:-0.14px;">1 minute, 26 seconds</span>
<span class="t" style="left:790.5px;top:710px;font-size:27px;line-height:27px;letter-spacing:-0.36px;color:#2dd68e;-webkit-text-stroke:1.3px #2dd68e;">Success</span>
<span class="t" style="left:948.4px;top:710px;font-size:27px;line-height:27px;letter-spacing:0.49px;">n2-highcpu-2</span>
<span class="t" style="left:1158.0px;top:710px;font-size:27px;line-height:27px;letter-spacing:0.75px;">openfast</span>
<span class="t" style="left:1315.7px;top:710px;font-size:27px;line-height:27px;letter-spacing:-0.17px;">0.00036 US$</span>
<span class="t" style="left:432.5px;top:814px;font-size:27px;line-height:27px;letter-spacing:-0.14px;">1 minute, 26 seconds</span>
<span class="t" style="left:790.5px;top:814px;font-size:27px;line-height:27px;letter-spacing:-0.36px;color:#2dd68e;-webkit-text-stroke:1.3px #2dd68e;">Success</span>
<span class="t" style="left:948.4px;top:814px;font-size:27px;line-height:27px;letter-spacing:0.49px;">n2-highcpu-2</span>
<span class="t" style="left:1158.0px;top:814px;font-size:27px;line-height:27px;letter-spacing:0.75px;">openfast</span>
<span class="t" style="left:1315.7px;top:814px;font-size:27px;line-height:27px;letter-spacing:-0.17px;">0.00036 US$</span>
<span class="t" style="left:432.5px;top:917px;font-size:27px;line-height:27px;letter-spacing:-0.10px;">1 minute, 24 seconds</span>
<span class="t" style="left:790.5px;top:917px;font-size:27px;line-height:27px;letter-spacing:-0.36px;color:#2dd68e;-webkit-text-stroke:1.3px #2dd68e;">Success</span>
<span class="t" style="left:948.4px;top:917px;font-size:27px;line-height:27px;letter-spacing:0.49px;">n2-highcpu-2</span>
<span class="t" style="left:1158.0px;top:917px;font-size:27px;line-height:27px;letter-spacing:0.75px;">openfast</span>
<span class="t" style="left:1315.7px;top:917px;font-size:27px;line-height:27px;letter-spacing:-0.17px;">0.00035 US$</span>
<span class="t" style="left:432.5px;top:1021px;font-size:27px;line-height:27px;letter-spacing:-0.22px;">1 minute, 27 seconds</span>
<span class="t" style="left:790.5px;top:1021px;font-size:27px;line-height:27px;letter-spacing:-0.36px;color:#2dd68e;-webkit-text-stroke:1.3px #2dd68e;">Success</span>
<span class="t" style="left:948.4px;top:1021px;font-size:27px;line-height:27px;letter-spacing:0.49px;">n2-highcpu-2</span>
<span class="t" style="left:1158.0px;top:1021px;font-size:27px;line-height:27px;letter-spacing:0.75px;">openfast</span>
<span class="t" style="left:1315.7px;top:1021px;font-size:27px;line-height:27px;letter-spacing:-0.17px;">0.00036 US$</span>
<span class="t" style="left:432.5px;top:1124px;font-size:27px;line-height:27px;letter-spacing:-0.22px;">1 minute, 27 seconds</span>
<span class="t" style="left:790.5px;top:1124px;font-size:27px;line-height:27px;letter-spacing:-0.36px;color:#2dd68e;-webkit-text-stroke:1.3px #2dd68e;">Success</span>
<span class="t" style="left:948.4px;top:1124px;font-size:27px;line-height:27px;letter-spacing:0.49px;">n2-highcpu-2</span>
<span class="t" style="left:1158.0px;top:1124px;font-size:27px;line-height:27px;letter-spacing:0.75px;">openfast</span>
<span class="t" style="left:1315.7px;top:1124px;font-size:27px;line-height:27px;letter-spacing:-0.17px;">0.00036 US$</span>
<span class="t" style="left:432.5px;top:1228px;font-size:27px;line-height:27px;letter-spacing:-0.15px;">1 minute, 25 seconds</span>
<span class="t" style="left:790.5px;top:1228px;font-size:27px;line-height:27px;letter-spacing:-0.36px;color:#2dd68e;-webkit-text-stroke:1.3px #2dd68e;">Success</span>
<span class="t" style="left:948.4px;top:1228px;font-size:27px;line-height:27px;letter-spacing:0.49px;">n2-highcpu-2</span>
<span class="t" style="left:1158.0px;top:1228px;font-size:27px;line-height:27px;letter-spacing:0.75px;">openfast</span>
<span class="t" style="left:1315.7px;top:1228px;font-size:27px;line-height:27px;letter-spacing:-0.17px;">0.00036 US$</span>
<span class="t" style="left:432.5px;top:1332px;font-size:27px;line-height:27px;letter-spacing:-0.15px;">1 minute, 25 seconds</span>
<span class="t" style="left:790.5px;top:1332px;font-size:27px;line-height:27px;letter-spacing:-0.36px;color:#2dd68e;-webkit-text-stroke:1.3px #2dd68e;">Success</span>
<span class="t" style="left:948.4px;top:1332px;font-size:27px;line-height:27px;letter-spacing:0.49px;">n2-highcpu-2</span>
<span class="t" style="left:1158.0px;top:1332px;font-size:27px;line-height:27px;letter-spacing:0.75px;">openfast</span>
<span class="t" style="left:1315.7px;top:1332px;font-size:27px;line-height:27px;letter-spacing:-0.17px;">0.00036 US$</span>
<span class="t" style="left:432.5px;top:1435px;font-size:27px;line-height:27px;letter-spacing:-0.14px;">1 minute, 26 seconds</span>
<span class="t" style="left:790.5px;top:1435px;font-size:27px;line-height:27px;letter-spacing:-0.36px;color:#2dd68e;-webkit-text-stroke:1.3px #2dd68e;">Success</span>
<span class="t" style="left:948.4px;top:1435px;font-size:27px;line-height:27px;letter-spacing:0.49px;">n2-highcpu-2</span>
<span class="t" style="left:1158.0px;top:1435px;font-size:27px;line-height:27px;letter-spacing:0.75px;">openfast</span>
<span class="t" style="left:1315.7px;top:1435px;font-size:27px;line-height:27px;letter-spacing:-0.17px;">0.00036 US$</span>
<span class="t" style="left:432.5px;top:1539px;font-size:27px;line-height:27px;letter-spacing:-0.15px;">1 minute, 25 seconds</span>
<span class="t" style="left:790.5px;top:1539px;font-size:27px;line-height:27px;letter-spacing:-0.36px;color:#2dd68e;-webkit-text-stroke:1.3px #2dd68e;">Success</span>
<span class="t" style="left:948.4px;top:1539px;font-size:27px;line-height:27px;letter-spacing:0.49px;">n2-highcpu-2</span>
<span class="t" style="left:1158.0px;top:1539px;font-size:27px;line-height:27px;letter-spacing:0.75px;">openfast</span>
<span class="t" style="left:1315.7px;top:1539px;font-size:27px;line-height:27px;letter-spacing:-0.17px;">0.00036 US$</span>
<span class="t" style="left:1822.2px;top:624px;font-size:27px;line-height:27px;letter-spacing:1.33px;color:#a1a1aa;">Name</span>
<span class="t" style="left:1929.6px;top:624px;font-size:27px;line-height:27px;letter-spacing:0.18px;color:#a1a1aa;">Machine Type</span>
<span class="t" style="left:2177.0px;top:624px;font-size:27px;line-height:27px;letter-spacing:0.82px;color:#a1a1aa;">Duration</span>
<span class="t" style="left:2479.0px;top:624px;font-size:27px;line-height:27px;letter-spacing:0.53px;color:#a1a1aa;">Status</span>
<span class="t" style="left:1930.6px;top:706px;font-size:27px;line-height:27px;letter-spacing:0.44px;">n2-highcpu-2</span>
<span class="t" style="left:2178.0px;top:706px;font-size:27px;line-height:27px;letter-spacing:-0.16px;">8 minutes, 15 seconds</span>
<span class="t" style="left:2536.9px;top:706px;font-size:27px;line-height:27px;letter-spacing:1.24px;color:#2dd68e;-webkit-text-stroke:1.3px #2dd68e;">Terminated</span>
<span class="t" style="left:89.5px;top:216px;font-size:13px;line-height:13px;font-weight:700;color:#0a0c12;-webkit-text-stroke:0.4px #0a0c12;transform:scaleX(0.959);transform-origin:0 50%;">NEW</span>
<span class="t" style="left:89.5px;top:636px;font-size:13px;line-height:13px;font-weight:700;color:#0a0c12;-webkit-text-stroke:0.4px #0a0c12;transform:scaleX(0.959);transform-origin:0 50%;">NEW</span>
<span class="t" style="left:86.9px;top:720px;font-size:13px;line-height:13px;font-weight:700;color:#0a0c12;-webkit-text-stroke:0.4px #0a0c12;transform:scaleX(0.930);transform-origin:0 50%;">BETA</span>
<span class="t" style="left:84.5px;top:1336px;font-size:13px;line-height:13px;font-weight:700;color:#0a0c12;-webkit-text-stroke:0.4px #0a0c12;transform:scaleX(0.966);transform-origin:0 50%;">NEW</span>
<span class="t" style="left:57.1px;top:1481px;font-size:36px;line-height:36px;-webkit-text-stroke:0.5px #fff;transform:scaleX(0.791);transform-origin:0 50%;">R</span>
</div>
</div>
<script>(function(){var w=window.innerWidth||2880;if(w&&Math.abs(w-2880)>1){var a=document.getElementById('app');a.style.transformOrigin='0 0';a.style.transform='scale('+(w/2880)+')';document.body.style.width=w+'px';document.body.style.height=(1570*w/2880)+'px';}})();</script>
</body></html>
